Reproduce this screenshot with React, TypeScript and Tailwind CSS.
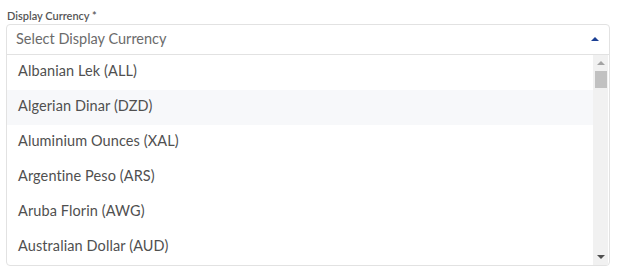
import React from "react";

const currencies = [
  "Albanian Lek (ALL)",
  "Algerian Dinar (DZD)",
  "Aluminium Ounces (XAL)",
  "Argentine Peso (ARS)",
  "Aruba Florin (AWG)",
  "Australian Dollar (AUD)",
];

export default function App() {
  return (
    <div className="w-[618px] h-[272px] bg-white font-['Lato',sans-serif]">
      <div className="pt-[9px] pl-[6px] pr-[8px]">
        <label className="block pl-px text-[11px] font-semibold leading-[13px] text-[#555] mb-[2px]">
          Display Currency *
        </label>
        <div className="border border-[#e2e2e2] rounded-[4px]">
          <div className="h-[30px] flex items-center justify-between pl-[9px] pr-[10px] pb-[2px] border-b border-[#e2e2e2]">
            <span className="text-[14.5px] text-[#6b6b6b]">Select Display Currency</span>
            <span className="w-0 h-0 border-l-[4px] border-r-[4px] border-b-[4px] border-l-transparent border-r-transparent border-b-[#1b3f94]" />
          </div>
          <div className="flex h-[210px]">
            <ul className="flex-1">
              {currencies.map((c, i) => (
                <li
                  key={c}
                  className={`h-[35px] flex items-center pl-[11px] pb-[3px] text-[14.5px] tracking-[0.1px] text-[#505050] ${
                    i === 1 ? "bg-[#f7f8fa]" : ""
                  }`}
                >
                  {c}
                </li>
              ))}
            </ul>
            <div className="w-[15px] mr-px bg-[#f1f1f1] flex flex-col items-center">
              <div className="h-[16px] flex items-center justify-center">
                <span className="w-0 h-0 border-l-[4px] border-r-[4px] border-b-[4px] border-l-transparent border-r-transparent border-b-[#a3a3a3]" />
              </div>
              <div className="w-[12px] h-[17px] bg-[#c1c1c1]" />
              <div className="flex-1" />
              <div className="h-[16px] flex items-center justify-center">
                <span className="w-0 h-0 border-l-[4px] border-r-[4px] border-t-[4px] border-l-transparent border-r-transparent border-t-[#505050]" />
              </div>
            </div>
          </div>
        </div>
      </div>
    </div>
  );
}
